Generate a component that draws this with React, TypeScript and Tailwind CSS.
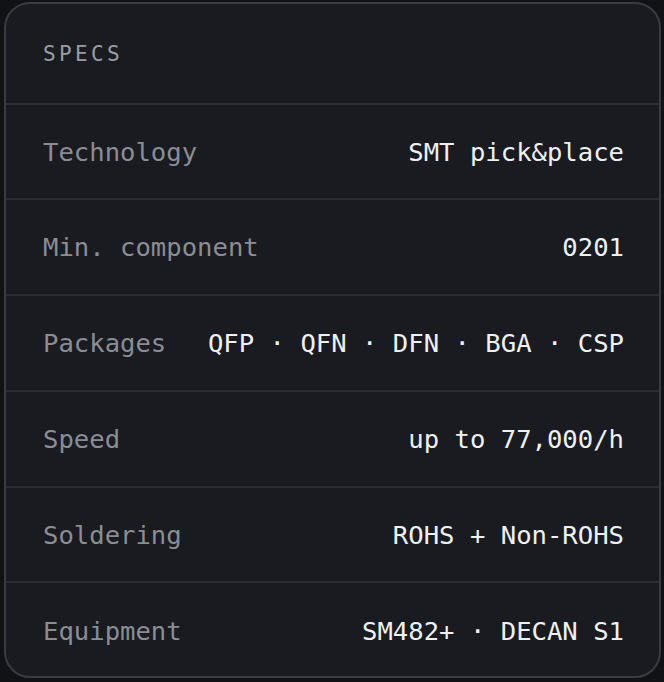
const SPECS: { label: string; value: string }[] = [
  { label: 'Technology', value: 'SMT pick&place' },
  { label: 'Min. component', value: '0201' },
  { label: 'Packages', value: 'QFP · QFN · DFN · BGA · CSP' },
  { label: 'Speed', value: 'up to 77,000/h' },
  { label: 'Soldering', value: 'ROHS + Non-ROHS' },
  { label: 'Equipment', value: 'SM482+ · DECAN S1' },
]

function SpecRow({ label, value }: { label: string; value: string }) {
  return (
    <div className="flex items-center justify-between gap-4 h-[95.8px] border-t-2 border-[#2c2d33] pl-[37px] pr-[35px] pt-[2px]">
      <span className="text-[#8a8d95] whitespace-nowrap">{label}</span>
      <span className="text-[#eef0f4] whitespace-nowrap">{value}</span>
    </div>
  )
}

export default function App() {
  return (
    <div className="w-[664px] h-[682px] bg-[#111216] pl-[4px] pt-[2px]">
      <div
        className="w-[657px] h-[676px] rounded-[26px] border-2 border-[#3a3b41] bg-[#1a1b20] overflow-hidden text-[25.6px] leading-none"
        style={{ fontFamily: '"DejaVu Sans Mono", "Liberation Mono", monospace' }}
      >
        {/* header */}
        <div className="h-[98.5px] flex items-center px-[37px] pt-[3px]">
          <span className="text-[21px] tracking-[0.16em] text-[#9a9ca4]">SPECS</span>
        </div>
        {SPECS.map((s) => (
          <SpecRow key={s.label} label={s.label} value={s.value} />
        ))}
      </div>
    </div>
  )
}
